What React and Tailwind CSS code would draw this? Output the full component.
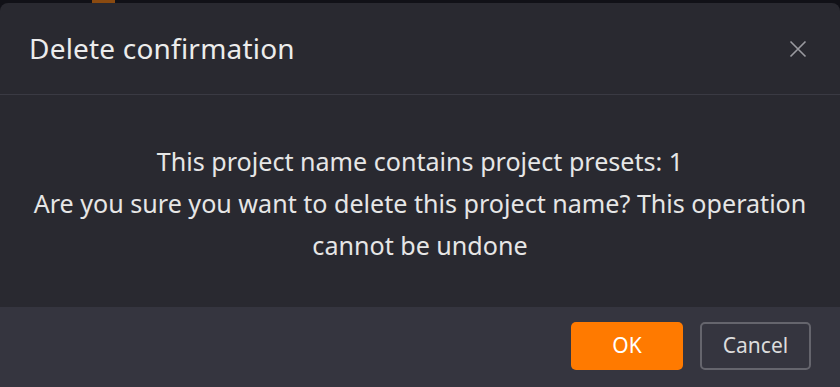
import React from 'react'

function CloseIcon() {
    return (
        <svg width="18" height="18" viewBox="0 0 18 18" fill="none" stroke="#9a9aa0" strokeWidth="1.6">
            <path d="M1.5 1.5 L16.5 16.5 M16.5 1.5 L1.5 16.5" />
        </svg>
    )
}

export default function App() {
    return (
        <div className="w-[840px] h-[387px] overflow-hidden bg-[#111117] flex flex-col" style={{ fontFamily: '"Noto Sans", "Open Sans", sans-serif' }}>
            {/* page behind the dialog */}
            <div className="h-[3px] shrink-0 flex items-start overflow-hidden">
                <div className="ml-[92px] w-[23px] h-[3px] bg-[#8a4a10]" />
            </div>

            <div className="flex-1 flex flex-col bg-[#292930] rounded-t-lg">
                <div className="h-[92px] shrink-0 flex items-center justify-between pl-[29px] pr-[32px] border-b border-[#3a3a43]">
                    <h2 className="text-[28px] text-[#ececec] tracking-[0.2px] pb-[2px]">Delete confirmation</h2>
                    <button className="w-[20px] h-[20px] flex items-center justify-center">
                        <CloseIcon />
                    </button>
                </div>

                <div className="flex-1 flex flex-col justify-center px-[24px] pt-[3px] text-center text-[25.1px] leading-[42px] text-[#e6e6e6]">
                    <p>This project name contains project presets: 1</p>
                    <p>Are you sure you want to delete this project name? This operation cannot be undone</p>
                </div>

                <div className="h-[80px] shrink-0 bg-[#35353f] flex items-center justify-end gap-[17px] pr-[29px] pb-[2px]">
                    <button className="w-[112px] h-[48px] rounded-[5px] bg-[#ff7a00] text-white text-[21px]">OK</button>
                    <button className="w-[111px] h-[48px] rounded-[5px] border-2 border-[#65656d] text-[#dcdcdc] text-[21px]">Cancel</button>
                </div>
            </div>
        </div>
    )
}
